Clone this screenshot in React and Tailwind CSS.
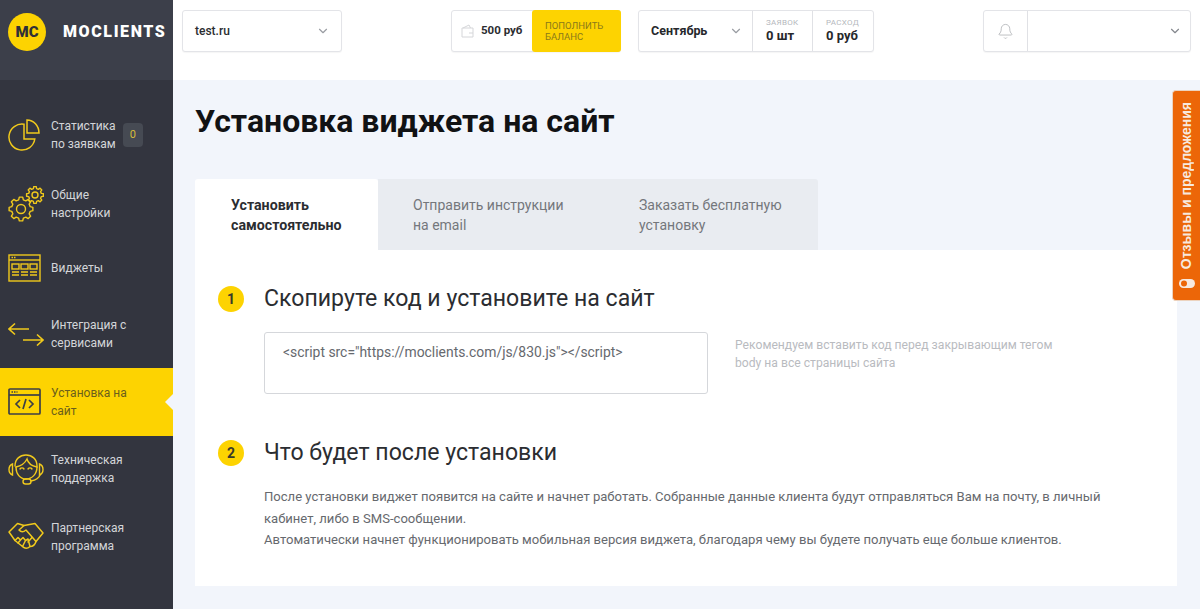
import { Bell, ChevronDown } from "lucide-react";

function gearPath(cx, cy, outer, inner, teeth) {
  const pts = [];
  const step = (Math.PI * 2) / teeth;
  for (let i = 0; i < teeth; i++) {
    const a = i * step;
    const list = [
      [inner, a - step * 0.32],
      [outer, a - step * 0.18],
      [outer, a + step * 0.18],
      [inner, a + step * 0.32],
    ];
    list.forEach(([r, t]) => pts.push(`${(cx + r * Math.cos(t)).toFixed(2)} ${(cy + r * Math.sin(t)).toFixed(2)}`));
  }
  return "M" + pts.join("L") + "Z";
}

function PieIcon() {
  return (
    <svg width="33" height="32" viewBox="0 0 33 32" fill="none" stroke="currentColor" strokeWidth="1.5">
      <path d="M16 5.200A13 13 0 1 0 26.800 20H16Z" />
      <path d="M19 1A12 13 0 0 1 31 14H19Z" />
    </svg>
  );
}

function GearsIcon() {
  return (
    <svg width="36" height="36" viewBox="0 0 36 36" fill="none" stroke="currentColor" strokeWidth="1.4" strokeLinejoin="round">
      <path d={gearPath(13, 23, 12, 9.5, 8)} />
      <circle cx="13" cy="23" r="4.500" />
      <path d={gearPath(27, 9, 8.500, 6.500, 8)} />
      <circle cx="27" cy="9" r="3" />
    </svg>
  );
}

function WidgetIcon() {
  return (
    <svg width="33" height="28" viewBox="0 0 33 28" fill="none" stroke="currentColor" strokeWidth="1.4">
      <rect x="1" y="1" width="31" height="26" />
      <path d="M1 6h31" />
      <path d="M3.500 3.500h5" strokeDasharray="1.500 1" />
      <rect x="4" y="10" width="7" height="5" />
      <rect x="13" y="10" width="7" height="5" />
      <rect x="22" y="10" width="7" height="5" />
      <path d="M4 18h7M13 18h7M22 18h7M4 21h7M13 21h7M22 21h7" />
    </svg>
  );
}

function ArrowsIcon() {
  return (
    <svg width="36" height="24" viewBox="0 0 36 24" fill="none" stroke="currentColor" strokeWidth="1.6">
      <path d="M1 7h20M7 1.500 1 7l6 5.500" />
      <path d="M15 18h20M29 12.500 35 18l-6 5.500" />
    </svg>
  );
}

function CodeIcon() {
  return (
    <svg width="33" height="27" viewBox="0 0 33 27" fill="none" stroke="currentColor" strokeWidth="1.7">
      <rect x="1" y="1" width="31" height="25" rx="1" />
      <path d="M1 7h31" />
      <path d="M3.500 4h6" strokeDasharray="1.500 1" />
      <path d="M12 12l-4 4 4 4M21 12l4 4-4 4M18 11l-3 10" />
    </svg>
  );
}

function SupportIcon() {
  return (
    <svg width="36" height="31" viewBox="0 0 36 31" fill="none" stroke="currentColor" strokeWidth="1.4" strokeLinecap="round">
      <path d="M7 12C7 5 12 1 18 1s11 4 11 11" />
      <path d="M8 13c5-1 9-4 11-8 1 4 5 7 10 8" />
      <path d="M8 13c0 7 4 12 10 12s11-5 11-12" />
      <path d="M12 15c1-1.500 3-1.500 4 0M20 15c1-1.500 3-1.500 4 0" />
      <path d="M4.500 10C2 11 1 13 1 15.500S2 20 4.500 21ZM31.500 10c2.500 1 3.500 3 3.500 5.500S34 20 31.500 21Z" />
      <path d="M32 21c-1 3-4 5-9 6" />
      <rect x="15" y="25" width="8" height="5" rx="2.500" />
    </svg>
  );
}

function HandshakeIcon() {
  return (
    <svg width="36" height="32" viewBox="0 0 36 32" fill="none" stroke="currentColor" strokeWidth="1.5" strokeLinejoin="round" strokeLinecap="round">
      <path d="M1 11 9.500 2.500 16 4.500 27 2.500 35 12 28 20.500Q26.500 25.500 22 25.500 18 29 14.500 25.500L7 19.500Z" />
      <path d="M16 4.500 11 9Q14 12.500 18 9L28 20.500" />
      <path d="M7 19.500 10 16.500 12.500 19 10 22M12.500 19 15 16.500 17.500 19.500 14.500 25.500M17.500 19.500 20 18 22 25.500M24 16.500 20 21" />
    </svg>
  );
}

const navItems = [
  { icon: <PieIcon />, lines: ["Статистика", "по заявкам"], badge: "0", h: "h-[68.5px]" },
  { icon: <GearsIcon />, lines: ["Общие", "настройки"], h: "h-[68px]" },
  { icon: <WidgetIcon />, lines: ["Виджеты"], h: "h-[61.5px]" },
  { icon: <ArrowsIcon />, lines: ["Интеграция с", "сервисами"], h: "h-[69px]" },
  { icon: <CodeIcon />, lines: ["Установка на", "сайт"], active: true, h: "h-[67.5px]" },
  { icon: <SupportIcon />, lines: ["Техническая", "поддержка"], h: "h-[67.5px]" },
  { icon: <HandshakeIcon />, lines: ["Партнерская", "программа"], h: "h-[67.5px]" },
];

function NavItem({ item }) {
  return (
    <a className={"relative flex items-center pl-[8px] " + item.h + " " + (item.active ? "bg-[#fdd301] text-[#3c3f47]" : "text-[#f0c91c]")}>
      <span className="flex w-[43px] shrink-0 justify-start">{item.icon}</span>
      <span className={"text-[12px] leading-[18px] " + (item.active ? "text-[#6b5f1c]" : "text-[#d3d5d9]")}>
        {item.lines.map((l) => (
          <span key={l} className="block whitespace-nowrap">{l}</span>
        ))}
      </span>
      {item.badge && (
        <span className="ml-[7px] flex h-[24px] w-[20px] items-center justify-center rounded-[4px] bg-[#464a53] text-[11px] text-[#d8bc3a]">
          {item.badge}
        </span>
      )}
      {item.active && (
        <span className="absolute right-0 top-1/2 size-0 -translate-y-1/2 border-y-[8px] border-r-[8px] border-y-transparent border-r-[#f2f5fb]" />
      )}
    </a>
  );
}

function Box({ className, children }) {
  return (
    <div className={"flex h-[42px] rounded-[3px] border border-[#e3e4e8] bg-white shadow-[0_1px_1px_rgba(0,0,0,0.04)] " + className}>
      {children}
    </div>
  );
}

function Stat({ label, value, className }) {
  return (
    <div className={"flex flex-col justify-center border-l border-[#e0e1e5] pl-[13px] " + className}>
      <span className="text-[8px] leading-[10px] tracking-[0.3px] text-[#b5b8bd]">{label}</span>
      <span className="text-[13px] font-bold leading-[16px] text-[#26282c]">{value}</span>
    </div>
  );
}

function Step({ n, title }) {
  return (
    <div className="flex items-center">
      <span className="flex size-[26px] items-center justify-center rounded-full bg-[#fdd301] text-[14px] font-bold text-[#3a3a2a]">{n}</span>
      <h2 className="ml-[20px] text-[23.100px] font-normal leading-[30px] text-[#2b2d31]">{title}</h2>
    </div>
  );
}

export default function App() {
  return (
    <div className="relative flex h-[609px] w-full overflow-hidden bg-white font-['Roboto',sans-serif]">
      <aside className="flex w-[173px] shrink-0 flex-col bg-[#33353f]">
        <div className="flex h-[80px] items-start bg-[#3c3f4a] pl-[8px] pt-[13px]">
          <span className="flex size-[38px] items-center justify-center rounded-full bg-[#fdd301] text-[15px] font-black text-[#2f3038]">MC</span>
          <span className="ml-[17px] mt-[9px] text-[16px] font-black leading-[20px] tracking-[1.6px] text-white">MOCLIENTS</span>
        </div>
        <nav className="mt-[21px] flex flex-col">
          {navItems.map((item) => (
            <NavItem key={item.lines[0]} item={item} />
          ))}
        </nav>
      </aside>

      <div className="flex min-w-0 flex-1 flex-col">
        <header className="flex h-[80px] shrink-0 items-start pt-[10px] pl-[9px]">
          <Box className="w-[160px] items-center justify-between pl-[12px] pr-[11px]">
            <span className="text-[12px] font-medium text-[#2b2d31]">test.ru</span>
            <ChevronDown size={14} className="text-[#9a9da3]" />
          </Box>

          <Box className="ml-[109px] w-[170px]">
            <div className="flex w-[80px] items-center pl-[9px]">
              <svg width="13" height="14" viewBox="0 0 13 14" fill="none" stroke="#d5d6d9" strokeWidth="1">
                <path d="M1 4h11v9H1zM2 4l6-3 1.500 3M8 9h4" />
              </svg>
              <span className="ml-[7px] text-[11.5px] font-bold text-[#2b2d31]">500 руб</span>
            </div>
            <div className="-my-px -mr-px flex flex-1 items-center rounded-[3px] bg-[#fdd301] pl-[13px] text-[9.5px] leading-[11px] text-[#8a7a1a]">
              ПОПОЛНИТЬ<br />БАЛАНС
            </div>
          </Box>

          <Box className="ml-[17px] w-[236px]">
            <div className="flex w-[113px] items-center justify-between pl-[12px] pr-[9px]">
              <span className="text-[12.500px] font-bold text-[#26282c]">Сентябрь</span>
              <ChevronDown size={14} className="text-[#9a9da3]" />
            </div>
            <Stat label="ЗАЯВОК" value="0 шт" className="w-[60px]" />
            <Stat label="РАСХОД" value="0 руб" className="flex-1" />
          </Box>

          <Box className="ml-[109px] w-[208px]">
            <div className="flex w-[44px] items-center justify-center border-r border-[#e0e1e5]">
              <Bell size={17} strokeWidth={1} className="text-[#a5a7ab]" />
            </div>
            <div className="flex flex-1 items-center justify-end pr-[8px]">
              <ChevronDown size={14} className="text-[#85888e]" />
            </div>
          </Box>
        </header>

        <main className="flex-1 bg-[#f2f5fb] pl-[22px] pr-[23px]">
          <h1 className="mt-[21px] text-[32px] font-bold leading-[40px] text-[#111214]">Установка виджета на сайт</h1>

          <div className="mt-[38px] flex h-[71px] text-[14px] leading-[20px]">
            <div className="flex w-[183px] items-center rounded-t-[3px] bg-white pl-[36px] text-[14.200px] font-bold text-[#2b2d31]">
              <span>Установить<br />самостоятельно</span>
            </div>
            <div className="flex w-[440px] rounded-tr-[3px] bg-[#e9ecf1] text-[#74777c]">
              <div className="flex w-[261px] items-center pl-[35px]"><span>Отправить инструкции<br />на email</span></div>
              <div className="flex items-center"><span>Заказать бесплатную<br />установку</span></div>
            </div>
          </div>

          <section className="h-[336px] bg-white pl-[23px] pt-[34px]">
            <Step n="1" title="Скопируте код и установите на сайт" />
            <div className="ml-[46px] mt-[18px] flex">
              <div className="h-[62px] w-[444px] rounded-[3px] border border-[#d5d7db] pl-[18px] pt-[10px] text-[13.900px] leading-[18px] text-[#66696e]">
                {'<script src="https://moclients.com/js/830.js"></script>'}
              </div>
              <p className="ml-[27px] mt-[4px] text-[12.150px] leading-[18px] text-[#b9bbbf]">
                Рекомендуем вставить код перед закрывающим тегом<br />body на все страницы сайта
              </p>
            </div>
            <div className="mt-[44px]">
              <Step n="2" title="Что будет после установки" />
            </div>
            <p className="ml-[46px] mt-[18px] text-[13.070px] leading-[21.500px] text-[#66696e]">
              После установки виджет появится на сайте и начнет работать. Собранные данные клиента будут отправляться Вам на почту, в личный<br />
              кабинет, либо в SMS-сообщении.<br />
              Автоматически начнет функционировать мобильная версия виджета, благодаря чему вы будете получать еще больше клиентов.
            </p>
          </section>
        </main>
      </div>

      <div className="absolute right-0 top-[90px] flex h-[211px] w-[28px] flex-col items-center rounded-l-[4px] border border-r-0 border-[#ecd3bf] bg-[#ec6608] pt-[11px] font-['Liberation_Sans',sans-serif] text-[14px] font-bold text-[#f7e9df]">
        <span className="rotate-180 whitespace-nowrap [writing-mode:vertical-rl]">Отзывы и предложения</span>
        <svg className="mt-[9px]" width="16" height="11" viewBox="0 0 16 11">
          <rect x="0" y="1" width="16" height="9" rx="4.500" fill="#f7e9df" />
          <circle cx="5" cy="5.500" r="3" fill="#ec6608" />
        </svg>
      </div>
    </div>
  );
}
